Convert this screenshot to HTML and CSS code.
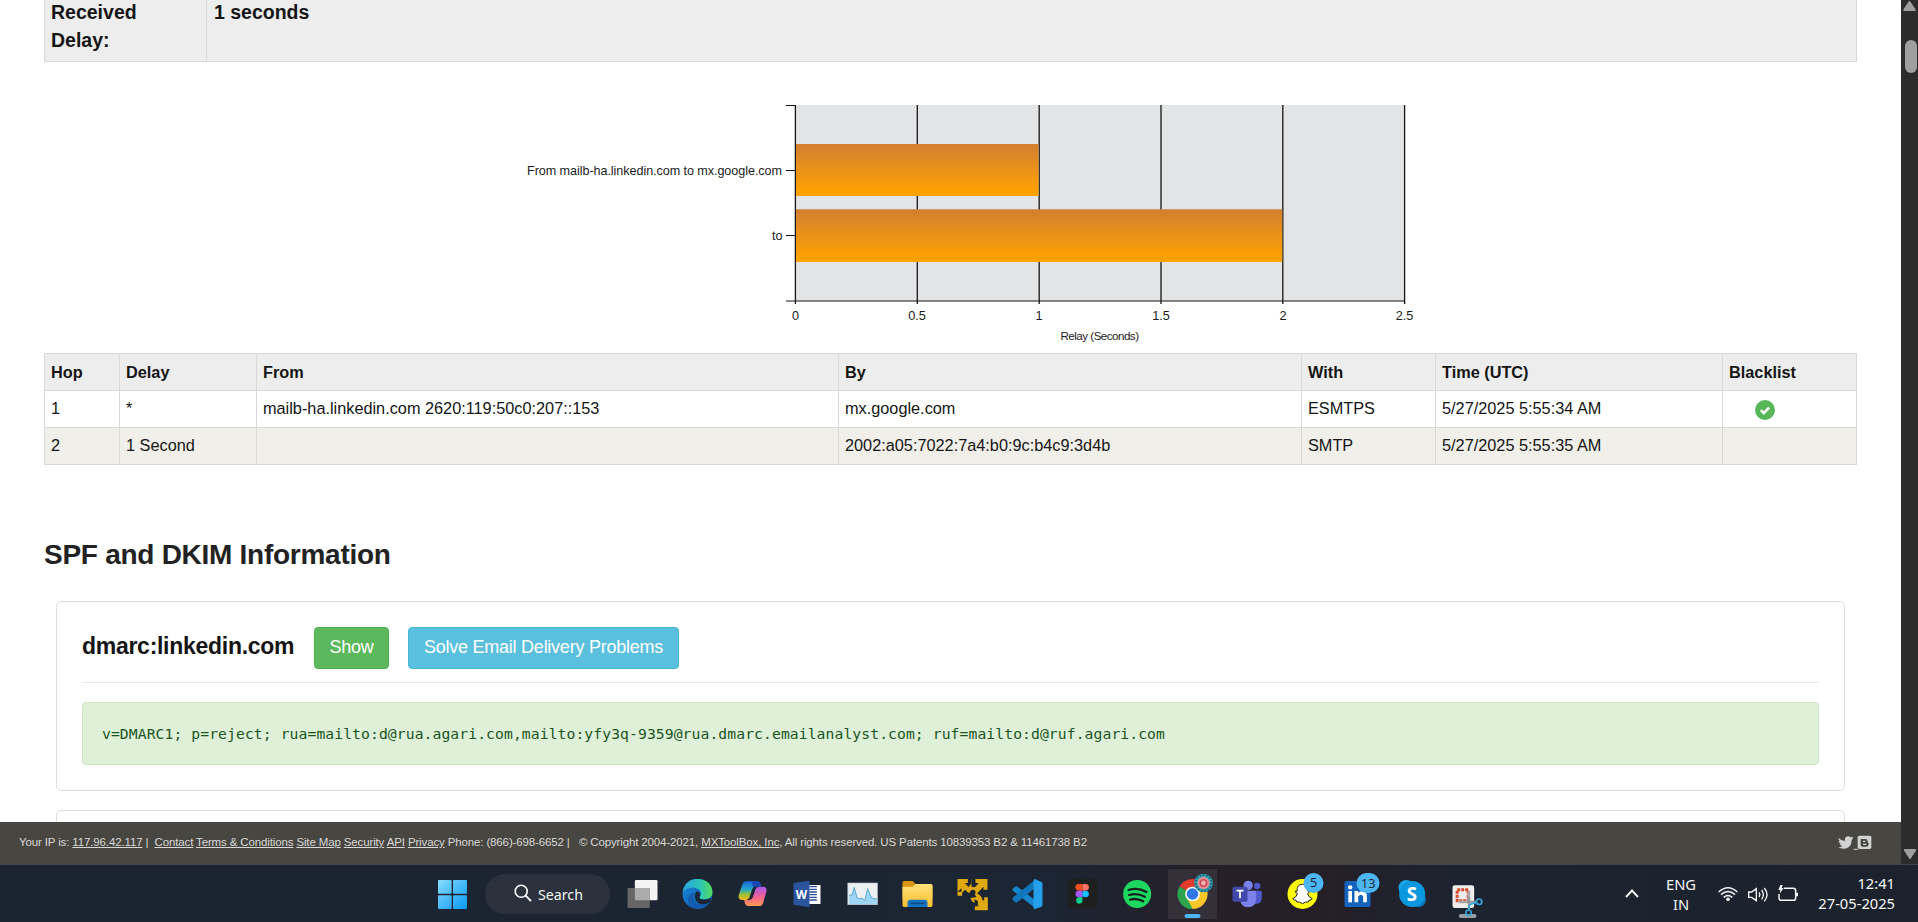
FILE: index.html
```html
<!DOCTYPE html>
<html lang="en">
<head>
<meta charset="utf-8">
<title>Email Header Analyzer</title>
<link rel="stylesheet" href="styles.css">
</head>
<body>
<div class="screen">
  <div class="viewport">
    <main class="page">
      <div class="summary">
        <div class="summary-label">Received Delay:</div>
        <div class="summary-value">1 seconds</div>
      </div>

      <svg class="chart" viewBox="500 90 940 260">
        <defs>
          <linearGradient id="bar" x1="0" y1="0" x2="0" y2="1">
            <stop offset="0" stop-color="#d27f31"/><stop offset=".9" stop-color="#fda103"/><stop offset="1" stop-color="#ffa300"/>
          </linearGradient>
        </defs>
        <rect x="795" y="105" width="610" height="196" fill="#e3e4e6"/>
        <g stroke="#151515" stroke-width="1.3">
          <path d="M917.3 105V304M1039.2 105V304M1161 105V304M1282.8 105V304M1404.6 105V304M795.4 105V304"/>
          <path stroke-width="1" d="M786 105.5H795M786 170.500H795M786 235.5H795M786 301H1405"/>
        </g>
        <rect x="796" y="144" width="242.6" height="52" fill="url(#bar)"/>
        <rect x="796" y="209.3" width="486.3" height="52.7" fill="url(#bar)"/>
        <g class="axis">
          <text x="527" y="174.500" textLength="255">From mailb-ha.linkedin.com to mx.google.com</text>
          <text x="782.5" y="240" text-anchor="end">to</text>
          <text class="mid" x="795.5" y="320">0</text>
          <text class="mid" x="917" y="320">0.5</text>
          <text class="mid" x="1039" y="320">1</text>
          <text class="mid" x="1161" y="320">1.5</text>
          <text class="mid" x="1283" y="320">2</text>
          <text class="mid" x="1404.5" y="320">2.5</text>
          <text class="title" x="1060.500" y="339.5" textLength="78.500">Relay (Seconds)</text>
        </g>
      </svg>

      <table class="hops">
        <colgroup><col class="c1"><col class="c2"><col class="c3"><col class="c4"><col class="c5"><col class="c6"><col class="c7"></colgroup>
        <tr><th>Hop</th><th>Delay</th><th>From</th><th>By</th><th>With</th><th>Time (UTC)</th><th>Blacklist</th></tr>
        <tr><td>1</td><td>*</td><td>mailb-ha.linkedin.com 2620:119:50c0:207::153</td><td>mx.google.com</td><td>ESMTPS</td><td>5/27/2025 5:55:34 AM</td><td class="status"><svg class="check" viewBox="0 0 20 20"><circle cx="10" cy="10" r="10" fill="#56b658"/><path d="M5.8 10.2l3 3 5.3-5.6" fill="none" stroke="#fff" stroke-width="2.6"/></svg></td></tr>
        <tr class="alt"><td>2</td><td>1 Second</td><td></td><td>2002:a05:7022:7a4:b0:9c:b4c9:3d4b</td><td>SMTP</td><td>5/27/2025 5:55:35 AM</td><td></td></tr>
      </table>

      <h2 class="section-title">SPF and DKIM Information</h2>

      <section class="card">
        <div class="card-head">
          <h3 class="card-title">dmarc:linkedin.com</h3>
          <button class="btn btn-show">Show</button>
          <button class="btn btn-solve">Solve Email Delivery Problems</button>
        </div>
        <div class="record">v=DMARC1; p=reject; rua=mailto:d@rua.agari.com,mailto:yfy3q-9359@rua.dmarc.emailanalyst.com; ruf=mailto:d@ruf.agari.com</div>
      </section>
      <section class="card"></section>
    </main>
    <footer class="footer">
      <div class="legal">Your IP is: <u>117.96.42.117</u> |&nbsp; <u>Contact</u> <u>Terms &amp; Conditions</u> <u>Site Map</u> <u>Security</u> <u>API</u> <u>Privacy</u> Phone: (866)-698-6652 |&nbsp;&nbsp; © Copyright 2004-2021, <u>MXToolBox, Inc</u>, All rights reserved. US Patents 10839353 B2 &amp; 11461738 B2</div>
      <svg class="social" viewBox="0 0 102 48">
        <path fill="#d2d2d2" d="M2 9q8 9 19 9q-2-13 9-14q5 0 7 3l8-2q-1 4-3 6l3-1-4 6q-1 22-20 25q-12 1-20-4q8 0 12-4q-7-1-8-6h4q-7-3-7-9l4 1q-6-5-4-10z"/>
        <path d="M47 43h13" stroke="#d2d2d2" stroke-width="3"/>
        <rect x="59" y="2" width="41" height="40" rx="5" fill="#d2d2d2"/>
        <path d="M68 12h14q7 0 7 7v3l3 2v4q0 7-7 7H74q-6 0-6-6z" fill="#484640"/>
        <path d="M75 19h7M75 28h10" stroke="#d2d2d2" stroke-width="4"/>
      </svg>
    </footer>
  </div>

  <div class="scrollbar">
    <svg viewBox="0 0 17 12"><path d="M8.5 2L13.8 10H3.2z" fill="#9f9f9f" stroke="#9f9f9f" stroke-width="2" stroke-linejoin="round"/></svg>
    <div class="thumb"></div>
    <svg class="down" viewBox="0 0 17 12"><path d="M3.8 2H14.2L9 10z" fill="#9f9f9f" stroke="#9f9f9f" stroke-width="2" stroke-linejoin="round"/></svg>
  </div>
</div>

<div class="taskbar">
  <div class="apps">
    <svg class="app" viewBox="15 0 165 174">
      <defs><linearGradient id="win" x1="54" y1="48" x2="140" y2="134" gradientUnits="userSpaceOnUse"><stop stop-color="#86dcfb"/><stop offset="1" stop-color="#0b98f8"/></linearGradient></defs>
      <g fill="url(#win)"><rect x="54" y="48" width="41" height="41" rx="3"/><rect x="99" y="48" width="42" height="41" rx="3"/><rect x="54" y="94" width="41" height="41" rx="3"/><rect x="99" y="94" width="42" height="41" rx="3"/></g>
    </svg>
    <div class="search">
      <svg viewBox="0 0 18 18"><circle cx="7.2" cy="7.2" r="6" fill="none" stroke="#fff" stroke-width="1.6"/><path d="M11.6 11.6L17 17" stroke="#fff" stroke-width="1.8"/></svg>
      <span>Search</span>
    </div>
    <svg class="app" viewBox="583.5 0 165 174">
      <rect x="643" y="48" width="68" height="61" rx="4" fill="#f3f3f3"/>
      <rect x="621" y="72" width="67" height="60" rx="4" fill="#666"/>
      <path d="M643 72h41q4 0 4 4v33h-41q-4 0-4-4z" fill="#acacac"/>
    </svg>
    <svg class="app" viewBox="748.5 0 165 174">
      <defs>
        <linearGradient id="e1" x1="0" x2="1"><stop stop-color="#2aa7e0"/><stop offset=".6" stop-color="#2cc6b5"/><stop offset="1" stop-color="#56d957"/></linearGradient>
        <linearGradient id="e2" x1="0" y1="0" x2="1" y2="1"><stop stop-color="#1b8fe0"/><stop offset="1" stop-color="#0d4a9a"/></linearGradient>
      </defs>
      <circle cx="831" cy="90" r="45" fill="url(#e2)"/>
      <path d="M787 83q7-38 44-38q42 2 45 39q1 22-25 22q-16 0-14-8q11-12-3-22q-22-14-47 7z" fill="url(#e1)"/>
      <path d="M832 82q11 8 5 16q-2 9 14 9q13 0 20-6l-2 12q-20 12-34 5q-16-12-10-31q2-5 7-5z" fill="#1b2531"/>
      <path d="M822 86q-12 26 13 37q18 6 31-7q-14 21-38 19q-26-6-25-30q2-17 19-19z" fill="#135cae"/>
    </svg>
    <svg class="app" viewBox="913.5 0 165 174">
      <defs>
        <linearGradient id="c1" x1="0" y1="0" x2="0" y2="1"><stop stop-color="#1769e0"/><stop offset=".45" stop-color="#2aa8c4"/><stop offset=".7" stop-color="#9bbf35"/><stop offset="1" stop-color="#f4b51d"/></linearGradient>
        <linearGradient id="c2" x1="0" y1="0" x2="0" y2="1"><stop stop-color="#a65ae8"/><stop offset=".5" stop-color="#ee5f95"/><stop offset="1" stop-color="#ff9a50"/></linearGradient>
      </defs>
      <path d="M976 52h35q8 1 11 15h-14q-10 0-13 9l-8 24q-3 8-10 8h-13q-13-1-9-15l10-31q3-9 11-10z" fill="url(#c1)"/>
      <path d="M994 52h17q8 1 11 15h-14q-7 0-10 5z" fill="#1c47b6"/>
      <path d="M1016 68h13q11 1 9 14l-10 34q-3 10-12 10h-35q-8-2-10-18h15q8 0 11-8l8-24q3-8 11-8z" fill="url(#c2)"/>
    </svg>
    <svg class="app" viewBox="-1.5 0 165 174">
      <rect x="75" y="63" width="45" height="57" fill="#fff"/>
      <path d="M87 68h22M87 76h22M87 84h22M87 92h22M87 100h22M87 108h22" stroke="#2a4f9b" stroke-width="4"/>
      <path d="M39 57L87 50V130L39 122z" fill="#2b549f"/>
      <text x="46" y="104" font-size="39" font-weight="bold" textLength="34" lengthAdjust="spacingAndGlyphs" fill="#fff">W</text>
    </svg>
    <svg class="app" viewBox="163.5 0 165 174">
      <rect x="202" y="57" width="89" height="65" fill="#edf0f3" stroke="#b4bcc4" stroke-width="2"/>
      <path d="M206 95q6-5 9-2l6-23 9 32q7 5 14 0l9 8 8-36 12 28 16 3v16h-83z" fill="#9fd6f5"/>
      <path d="M206 95q6-5 9-2l6-23 9 32q7 5 14 0l9 8 8-36 12 28 16 3" fill="none" stroke="#5aa9d6" stroke-width="3"/>
    </svg>
    <svg class="app" viewBox="328.5 0 165 174">
      <defs><linearGradient id="fo" x1="0" y1="0" x2="0" y2="1"><stop stop-color="#ffe07a"/><stop offset="1" stop-color="#fbc02d"/></linearGradient></defs>
      <path d="M366 56q0-5 5-5h25l10 9h45q5 0 5 5v40h-90z" fill="#d9950f"/>
      <path d="M366 68h30l10-8h45q5 0 5 5v59q0 5-5 5h-80q-5 0-5-5z" fill="url(#fo)"/>
      <path d="M381 129v-13q0-9 9-9h42q9 0 9 9v13z" fill="#1474c4"/><path d="M390 118h42" stroke="#0c4b85" stroke-width="5"/>
    </svg>
    <svg class="app" viewBox="493.5 0 165 174">
      <g fill="#e0a90f"><path d="M531 45h31v12h-9l11 12 9-11v-13h48v32h-12v-9l-19 20q14 8 16 20l5 2v-10h11v39h-39v-12h12l-8-8q-14-4-17-17l18-3-10-15-15 2-9-9-9 9v9h-14z"/></g>
      <g fill="#1b2531"><circle cx="577" cy="85" r="8"/><path d="M573 45h12v12h10l-12 13-10-2zM531 83l12-10v10zM582 123h10v-12l-10-5z"/></g>
    </svg>
    <svg class="app" viewBox="658.5 0 165 174">
      <path d="M697 76l7-7q3-2 7 1l55 43v21L698 109q-4-4 0-7z" fill="none"/>
      <path d="M697 74l7-6q3-2 7 0l56 43v23L698 81q-4-4-1-7z" fill="#1686cf"/>
      <path d="M697 108l6 6q4 2 8 0l55-44V46l-68 54q-4 4-1 8z" fill="#1077bd"/>
      <path d="M763 45l20 9q3 2 3 6v62q0 4-3 6l-20 7q-6 0-4-6V51q0-5 4-6z" fill="#27a0ec"/>
    </svg>
    <svg class="app" viewBox="823.5 0 165 174">
      <rect x="861" y="45" width="90" height="88" rx="8" fill="#1f1f20"/>
      <path d="M906 60h-11a9.500 9.500 0 0 0 0 20h11z" fill="#f24e1e"/><path d="M906 60h9a9.500 9.500 0 0 1 0 20h-9z" fill="#ff7262"/>
      <path d="M906 80h-11a9.500 9.500 0 0 0 0 20h11z" fill="#a259ff"/><circle cx="915" cy="90" r="10" fill="#1abcfe"/>
      <path d="M906 100h-10a9.500 9.500 0 1 0 10 9z" fill="#0acf83"/>
    </svg>
    <svg class="app" viewBox="-91.500 0 165 174">
      <circle cx="-10" cy="90" r="42" fill="#1ed760"/>
      <path d="M-36 78q28-9 54 6M-34 93q24-7 47 5M-31 107q20-6 39 5" fill="none" stroke="#15231f" stroke-width="7" stroke-linecap="round"/>
    </svg>
    <div class="slot active">
      <svg class="app" viewBox="73.500 0 165 174">
        <path d="M156 90L117 67.500A45 45 0 0 1 195 67.500z" fill="#e33b2e"/>
        <path d="M156 90L117 67.500A45 45 0 0 0 156 135z" fill="#2da44e"/>
        <path d="M156 90L195 67.500A45 45 0 0 1 156 135z" fill="#fcc629"/>
        <path d="M156 68h40l-4-10z" fill="#e33b2e"/><path d="M138 101l18 34 20-34z" fill="#fcc629"/><path d="M138 101l18 34q-25 0-39-22z" fill="#2da44e"/>
        <circle cx="156" cy="90" r="22" fill="#fff"/><circle cx="156" cy="90" r="17.500" fill="#2f76e8"/>
        <circle cx="189" cy="57" r="28" fill="#37a6b4"/><circle cx="189" cy="57" r="24" fill="none" stroke="#1c5f78" stroke-width="6" stroke-dasharray="5 5"/><circle cx="189" cy="57" r="18" fill="#ee8e91"/><circle cx="189" cy="57" r="10" fill="none" stroke="#c44757" stroke-width="4"/><circle cx="189" cy="57" r="4" fill="#f5cccc"/>
        <rect x="132" y="150" width="48" height="12" rx="6" fill="#4cb5f2"/>
      </svg>
    </div>
    <svg class="app" viewBox="238.500 0 165 174">
      <circle cx="323" cy="64" r="14" fill="#7b83eb"/><circle cx="350" cy="66" r="9.500" fill="#5059c9"/>
      <path d="M332 80h27q5 0 5 5v16q0 18-18 18h-10z" fill="#5059c9"/>
      <path d="M299 80h42q6 0 6 6v19q-1 25-24 25t-24-25z" fill="#7b83eb"/>
      <rect x="276" y="68" width="45" height="45" rx="5" fill="#4048aa"/>
      <path d="M288 80h21M298.500 80v23" stroke="#fff" stroke-width="5"/>
    </svg>
    <svg class="app" viewBox="403.500 0 165 174">
      <circle cx="486" cy="90" r="45" fill="#fffb0a"/>
      <path d="M486 61c12 0 17 8 16 21l5-1q2 5-6 8q3 11 14 15q-2 5-10 5l-2 5q-7-2-17 5q-10-7-17-5l-2-5q-8 0-10-5q11-4 14-15q-8-3-6-8l5 1c-1-13 4-21 16-21z" fill="#fff" stroke="#222" stroke-width="3"/>
      <circle cx="519" cy="57" r="30" fill="#4cb5f2"/><text class="badge" x="519" y="70">5</text>
    </svg>
    <svg class="app" viewBox="568.500 0 165 174">
      <rect x="612" y="51" width="78" height="78" rx="5" fill="#1463be"/>
      <circle cx="629" cy="70" r="6.500" fill="#fff"/><path d="M629 81v34" stroke="#fff" stroke-width="11"/><path d="M642 115V81h11v5q16-12 26 4v25h-11V97q-6-9-15 0v18z" fill="#fff"/>
      <rect x="648" y="27" width="69" height="60" rx="30" fill="#4cb5f2"/><text class="badge" x="683" y="71">13</text>
    </svg>
    <svg class="app" viewBox="733.500 0 165 174">
      <circle cx="797" cy="71" r="23" fill="#1aa7e4"/><circle cx="833" cy="107" r="23" fill="#0d78c0"/><circle cx="815" cy="90" r="39" fill="#0c98de"/>
      <text x="799" y="110" font-size="56" font-weight="bold" fill="#fff">S</text>
    </svg>
    <svg class="app" viewBox="898.500 0 165 174">
      <rect x="936" y="64" width="65" height="68" rx="7" fill="#f0eeec"/>
      <rect x="950" y="77" width="33" height="33" fill="none" stroke="#d84a2b" stroke-width="9" stroke-dasharray="9 3"/>
      <path d="M985 82v26q0 5-5 6h-26" fill="none" stroke="#aaa" stroke-width="8"/>
      <rect x="955" y="150" width="53" height="12" rx="6" fill="#9a9da1"/>
      <path d="M985 98v42M980 113h28" stroke="#8e959b" stroke-width="6"/>
      <circle cx="1016" cy="113" r="8" fill="none" stroke="#35a6de" stroke-width="5"/><circle cx="984" cy="146" r="8" fill="none" stroke="#35a6de" stroke-width="5"/><path d="M1008 115l-20 6-4 17" fill="none" stroke="#35a6de" stroke-width="5"/>
    </svg>
  </div>

  <div class="tray">
    <svg class="chevron" viewBox="0 0 14 9"><path d="M1 8l6-6.500L13 8" fill="none" stroke="#f2f2f2" stroke-width="1.900"/></svg>
    <div class="lang">ENG<br>IN</div>
    <svg class="status-icons" viewBox="351 310 246 60">
      <g fill="none" stroke="#f5f5f5" stroke-width="4.500">
        <path d="M356 334q28-26 56 0M363 342q21-19 42 0M371 350q13-11 26 0"/>
        <path d="M446 334h9l14-10v36l-14-10h-9zM477 335q5 7 0 14M485 328q10 14 0 28M493 322q16 20 0 40" stroke-width="4"/>
        <path d="M552 323h28q7 0 7 7v22q0 7-7 7h-36q-7 0-7-7v-12"/>
      </g>
      <circle cx="384" cy="356" r="5.500" fill="#f5f5f5"/><path d="M588 336h6v11h-6zM541 313l-6 15h6l-2 11 12-17h-6l3-9z" fill="#f5f5f5"/>
    </svg>
    <div class="clock">12:41<br>27-05-2025</div>
  </div>
</div>
</body>
</html>
```
FILE: styles.css
```css
* { box-sizing: border-box; }
body {
  margin: 0;
  width: 1918px;
  height: 922px;
  overflow: hidden;
  background: #fff;
  color: #151515;
  font-family: "Liberation Sans", Arial, sans-serif;
}
.screen { display: flex; height: 864px; }
.viewport { display: flex; flex-direction: column; width: 1901px; height: 864px; }
.page { height: 822px; padding: 0 44px; overflow: hidden; }

.summary {
  display: flex;
  height: 62px;
  border: 1px solid #d9d9d9;
  border-top: 0;
  background: #ededed;
  font-size: 19.5px;
  font-weight: bold;
  line-height: 28px;
}
.summary-label { width: 162px; padding: 0 60px 0 6px; border-right: 1px solid #d9d9d9; margin-top: -2px; }
.summary-value { padding-left: 7px; margin-top: -2px; }

.chart { display: block; width: 940px; height: 260px; margin: 28px 0 3px 456px; }
.axis { font-size: 12.600px; fill: #1c1c1c; }
.axis .mid { text-anchor: middle; font-size: 12.700px; }
.axis .title { font-size: 11.600px; }

.hops {
  width: 1813px;
  border-collapse: collapse;
  table-layout: fixed;
  font-size: 16.300px;
}
.hops th, .hops td { height: 37px; padding: 0 6px; border: 1px solid #d9d9d9; text-align: left; line-height: 20px; }
.hops td { padding-bottom: 2px; }
.hops th { background: #ededed; }
.hops .alt { background: #f1efea; }
.c1 { width: 75px; } .c2 { width: 137px; } .c3 { width: 582px; } .c4 { width: 463px; }
.c5 { width: 134px; } .c6 { width: 287px; } .c7 { width: 134px; }
.hops .status { padding: 0 0 0 32px; }
.check { display: block; width: 20px; height: 20px; margin-top: 2px; }

.section-title { margin: 73px 0 0; font-size: 28px; line-height: 34px; color: #222; letter-spacing: -.27px; }

.card {
  width: 1789px;
  height: 190px;
  margin: 29px 0 -10px 12px;
  padding: 25px;
  border: 1px solid #dcdcdc;
  border-radius: 5px;
}
.card-head { display: flex; align-items: center; height: 56px; padding-bottom: 14px; border-bottom: 1px solid #eaeaea; }
.card-title { width: 232px; margin: 0; font-size: 23px; line-height: 28px; padding-bottom: 3px; white-space: nowrap; letter-spacing: -.28px; }
.btn { height: 42px; padding: 0; border-radius: 4px; font: 18px "Liberation Sans", Arial, sans-serif; letter-spacing: -.25px; color: #fff; }
.btn-show { width: 75px; margin-right: 19px; background: #5cb85c; border: 1px solid #4cae4c; }
.btn-solve { width: 271px; background: #5bc0de; border: 1px solid #46b8da; }
.record {
  height: 63px;
  margin-top: 19px;
  padding-left: 19px;
  border: 1px solid #d0e6c2;
  border-radius: 4px;
  background: #dff0d8;
  color: #1b551e;
  font: 14.700px/61px "DejaVu Sans Mono", monospace;
  letter-spacing: .09px;
  white-space: nowrap;
}

.footer {
  display: flex;
  justify-content: space-between;
  height: 42px;
  padding: 0 29px 0 19px;
  background: #484640;
  color: #d8d8d8;
}
.legal { font-size: 11.500px; line-height: 41px; letter-spacing: -.135px; white-space: nowrap; }
.social { width: 34px; height: 16px; margin-top: 13px; }

.scrollbar { display: flex; flex-direction: column; align-items: center; width: 17px; height: 864px; background: #2c2c2c; }
.scrollbar svg { width: 17px; height: 12px; }
.scrollbar .thumb { width: 12px; height: 33px; margin: 28px 0 0 2px; border-radius: 6px; background: #9f9f9f; }
.scrollbar .down { margin-top: auto; margin-bottom: 4px; }

.taskbar {
  display: flex;
  justify-content: space-between;
  height: 58px;
  padding: 0 23px 0 425px;
  background: linear-gradient(90deg, #1b2431 0, #1b2533 55%, #261f28 63%, #251f28 69%, #1c2430 76%, #1b222c 100%);
  box-shadow: inset 0 1px #41454b;
  color: #f7f7f7;
  font-family: "Noto Sans", "Open Sans", sans-serif;
}
.apps { display: flex; }
.app { display: block; width: 55px; height: 58px; flex: none; font-family: "Open Sans", sans-serif; }
.badge { font-size: 38px; text-anchor: middle; fill: #17212b; }
.search {
  display: flex;
  align-items: center;
  width: 125px;
  height: 40px;
  margin: 10px 4.500px 0 5px;
  padding-left: 29px;
  gap: 6px;
  border-radius: 20px;
  background: #2b323e;
  font-size: 14.200px;
}
.search svg { width: 18px; height: 18px; margin-bottom: 2px; }
.slot.active { background: linear-gradient(#34303a, #34303a) 3px 5px / 49px 50px no-repeat; }

.tray { display: flex; align-items: flex-start; font-size: 14.700px; line-height: 20px; }
.chevron { width: 14px; height: 9px; margin-top: 25px; }
.lang { width: 40px; margin: 10px 16px 0 22px; text-align: center; }
.status-icons { width: 82px; height: 20px; margin-top: 20px; }
.clock { width: 79px; margin: 9px 0 0 17px; text-align: right; white-space: nowrap; }
```
